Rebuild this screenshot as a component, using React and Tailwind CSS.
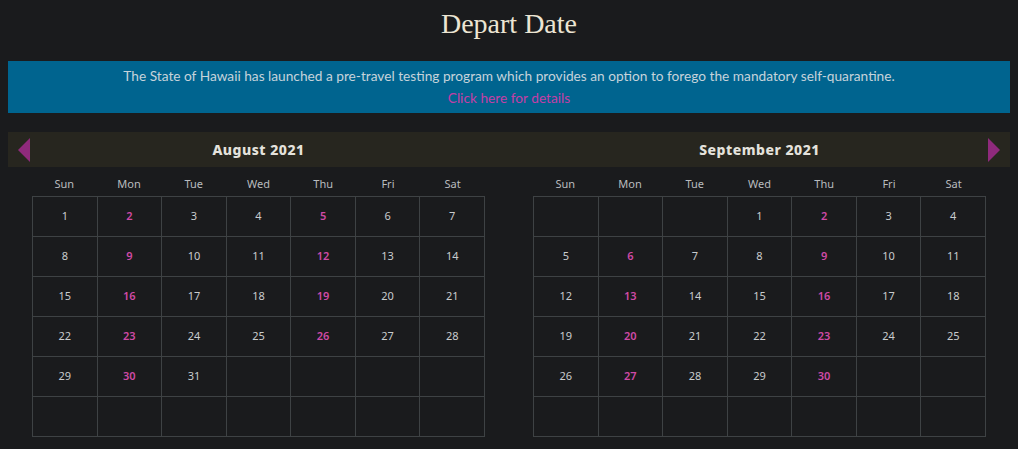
import React from "react";

const days = ["Sun", "Mon", "Tue", "Wed", "Thu", "Fri", "Sat"];

function Month({ offset, count }) {
  const cells = [];
  for (let i = 0; i < 42; i++) {
    const d = i - offset + 1;
    cells.push(d >= 1 && d <= count ? d : null);
  }
  return (
    <div className="px-6">
      <div className="grid grid-cols-7 h-[29px] items-center">
        {days.map((d) => (
          <div key={d} className="text-center text-[11px] text-[#b9bcbf] pt-[5px]">
            {d}
          </div>
        ))}
      </div>
      <div className="grid grid-cols-7 border-l border-t border-[#3e4244]">
        {cells.map((d, i) => {
          const col = i % 7;
          const hl = col === 1 || col === 4;
          return (
            <div
              key={i}
              className={`h-10 border-r border-b border-[#3e4244] flex items-center justify-center text-[11px] ${
                hl ? "text-[#cf4aa6] font-semibold" : "text-[#c9ccce]"
              }`}
            >
              {d}
            </div>
          );
        })}
      </div>
    </div>
  );
}

export default function App() {
  return (
    <div
      className="w-[1018px] h-[449px] bg-[#1a1b1d] overflow-hidden"
      style={{ fontFamily: '"Noto Sans", "Open Sans", sans-serif' }}
    >
      <div className="h-[61px] flex justify-center pt-[6px]">
        <h1
          className="text-[28px] text-[#ece5d3] leading-[36px]"
          style={{ fontFamily: '"Liberation Serif", "DejaVu Serif", serif' }}
        >
          Depart Date
        </h1>
      </div>
      <div
        className="mx-2 h-[52px] bg-[#00648f] flex flex-col items-center justify-center text-[13.7px] leading-[22px]"
        style={{ fontFamily: 'Lato, "Noto Sans", sans-serif' }}
      >
        <p className="text-[#c6d3db]">
          The State of Hawaii has launched a pre-travel testing program which provides an option to forego the mandatory self-quarantine.
        </p>
        <a className="text-[#c43fa6]">Click here for details</a>
      </div>
      <div className="mx-2 mt-[19px]">
        <div className="h-[35px] bg-[#27261f] grid grid-cols-2">
          <div className="relative flex items-center justify-center">
            <svg className="absolute left-[10px] top-[6px]" width="13" height="24" viewBox="0 0 13 24">
              <polygon points="12,0 0,12 12,24" fill="#8f2a7c" />
            </svg>
            <span className="text-[14px] font-extrabold tracking-[0.5px] text-[#e4e2dc]">August 2021</span>
          </div>
          <div className="relative flex items-center justify-center">
            <span className="text-[14px] font-extrabold tracking-[0.5px] text-[#e4e2dc]">September 2021</span>
            <svg className="absolute right-[9px] top-[6px]" width="13" height="24" viewBox="0 0 13 24">
              <polygon points="0,0 12,12 0,24" fill="#8f2a7c" />
            </svg>
          </div>
        </div>
        <div className="grid grid-cols-2">
          <Month offset={0} count={31} />
          <Month offset={3} count={30} />
        </div>
      </div>
    </div>
  );
}
